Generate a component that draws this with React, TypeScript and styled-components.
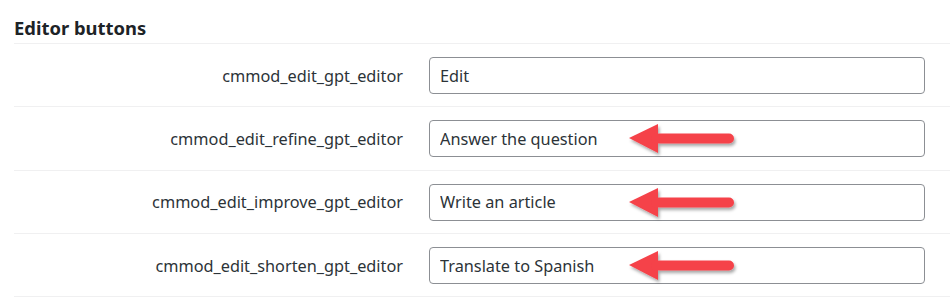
import { createGlobalStyle, styled } from "styled-components";

const GlobalStyle = createGlobalStyle`
  body {
    margin: 0;
    background: #ffffff;
    font-family: "Noto Sans", "Open Sans", sans-serif;
  }
`;

type Field = {
  name: string;
  value: string;
  arrow?: boolean;
};

const fields: Field[] = [
  { name: "cmmod_edit_gpt_editor", value: "Edit" },
  { name: "cmmod_edit_refine_gpt_editor", value: "Answer the question", arrow: true },
  { name: "cmmod_edit_improve_gpt_editor", value: "Write an article", arrow: true },
  { name: "cmmod_edit_shorten_gpt_editor", value: "Translate to Spanish", arrow: true },
];

function Arrow() {
  return (
    <ArrowSvg width="112" height="40" viewBox="0 0 112 40">
      <defs>
        <filter id="arrowShadow" x="-20%" y="-30%" width="140%" height="170%">
          <feDropShadow dx="1.5" dy="2.5" stdDeviation="1.6" floodColor="#000" floodOpacity="0.35" />
        </filter>
      </defs>
      <g filter="url(#arrowShadow)">
        <path d="M1 16 L30 2 L30 31 Z" fill="#f5424a" />
        <line x1="28" y1="16.5" x2="101" y2="16.5" stroke="#f5424a" strokeWidth="10" strokeLinecap="round" />
      </g>
    </ArrowSvg>
  );
}

export default function App() {
  return (
    <>
      <GlobalStyle />
      <Page>
        <Heading>Editor buttons</Heading>
        {fields.map((f) => (
          <Row key={f.name}>
            <Label>{f.name}</Label>
            <InputWrap>
              <TextInput defaultValue={f.value} readOnly />
              {f.arrow && <Arrow />}
            </InputWrap>
          </Row>
        ))}
      </Page>
    </>
  );
}

const Page = styled.div`
  padding-left: 14px;
  width: 936px;
`;

const Heading = styled.h2`
  margin: 0;
  height: 44px;
  box-sizing: border-box;
  padding-top: 15px;
  font-size: 18.4px;
  line-height: 26px;
  font-weight: 700;
  color: #1d2327;
  border-bottom: 1px solid #f0f0f1;
`;

const Row = styled.div`
  display: grid;
  grid-template-columns: 389px 496px;
  column-gap: 26px;
  align-items: center;
  height: 63.3px;
  box-sizing: border-box;
  border-bottom: 1px solid #f0f0f1;
  padding-top: 1px;
`;

const Label = styled.div`
  text-align: right;
  font-size: 16.3px;
  color: #2c3338;
  white-space: nowrap;
`;

const InputWrap = styled.div`
  position: relative;
  height: 37px;
`;

const TextInput = styled.input`
  box-sizing: border-box;
  width: 100%;
  height: 37px;
  margin: 0;
  padding: 0 10px;
  border: 1px solid #8c8f94;
  border-radius: 4px;
  background: #ffffff;
  font-family: "Noto Sans", "Open Sans", sans-serif;
  font-size: 16.3px;
  color: #2c3338;
  outline: none;
`;

const ArrowSvg = styled.svg`
  position: absolute;
  left: 199px;
  top: 2px;
  overflow: visible;
  pointer-events: none;
`;
